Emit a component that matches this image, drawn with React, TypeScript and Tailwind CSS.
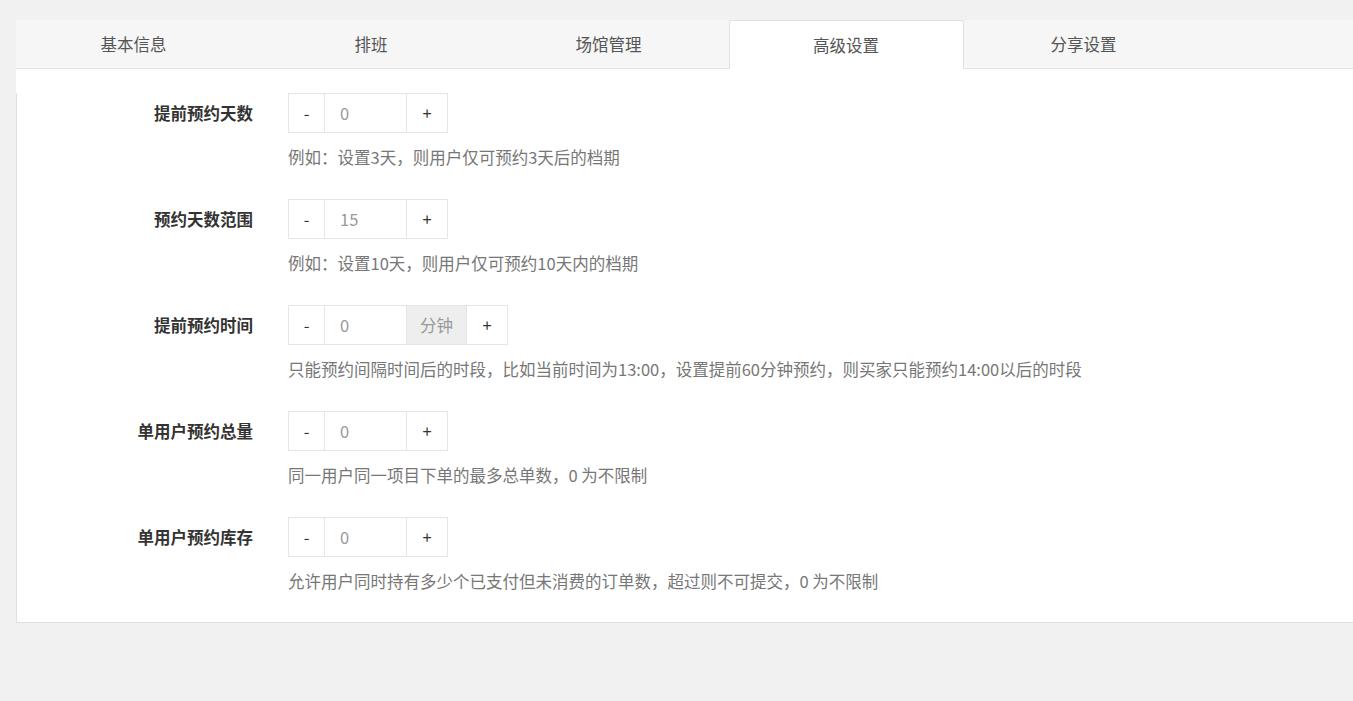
const tabs = ["基本信息", "排班", "场馆管理", "高级设置", "分享设置"];

interface Setting {
  label: string;
  value: string;
  unit?: string;
  help: string;
}

const settings: Setting[] = [
  { label: "提前预约天数", value: "0", help: "例如：设置3天，则用户仅可预约3天后的档期" },
  { label: "预约天数范围", value: "15", help: "例如：设置10天，则用户仅可预约10天内的档期" },
  {
    label: "提前预约时间",
    value: "0",
    unit: "分钟",
    help: "只能预约间隔时间后的时段，比如当前时间为13:00，设置提前60分钟预约，则买家只能预约14:00以后的时段",
  },
  { label: "单用户预约总量", value: "0", help: "同一用户同一项目下单的最多总单数，0 为不限制" },
  { label: "单用户预约库存", value: "0", help: "允许用户同时持有多少个已支付但未消费的订单数，超过则不可提交，0 为不限制" },
];

function Stepper({ value, unit }: { value: string; unit?: string }) {
  return (
    <div className="flex h-[40px] border border-[#e6e6e6] bg-white">
      <button type="button" className="flex w-[35px] items-center justify-center text-[#333]">
        -
      </button>
      <input
        readOnly
        value={value}
        className="w-[82px] border-l border-[#e6e6e6] pl-[15px] text-[#999] outline-none"
      />
      {unit ? (
        <span className="flex w-[60px] items-center justify-center border-l border-[#e6e6e6] bg-[#eeeeee] text-[#999]">
          {unit}
        </span>
      ) : null}
      <button type="button" className="flex w-[41px] items-center justify-center border-l border-[#e6e6e6] text-[#333]">
        +
      </button>
    </div>
  );
}

export default function App() {
  const active = 3;

  return (
    <div
      className="min-h-[701px] overflow-hidden bg-[#f1f1f1] pl-[16px] pt-[20px] text-[16.5px]"
      style={{ fontFamily: '"Noto Sans CJK SC", "Noto Sans", sans-serif' }}
    >
      <div className="flex h-[49px] gap-[2.5px] border-b border-[#e2e2e2] bg-[#f6f6f6]">
        {tabs.map((tab, index) => (
          <div
            key={tab}
            className={`flex w-[235px] shrink-0 items-center justify-center text-[#555] ${
              index === active ? "-mb-px rounded-t-[3px] border border-b-0 border-[#e0e0e0] bg-white" : ""
            }`}
          >
            {tab}
          </div>
        ))}
      </div>

      <div className="bg-white pt-[24px]">
        <div className="border-b border-l border-[#e0e0e0] pb-[29px]">
          {settings.map((item, index) => (
            <div key={item.label} className={index > 0 ? "mt-[30px]" : ""}>
              <div className="flex items-center">
                <div className="w-[236px] text-right font-bold text-[#333]">{item.label}</div>
                <div className="ml-[35px]">
                  <Stepper value={item.value} unit={item.unit} />
                </div>
              </div>
              <p className="mt-[12px] pl-[271px] leading-[24px] text-[#777]">{item.help}</p>
            </div>
          ))}
        </div>
      </div>
    </div>
  );
}
